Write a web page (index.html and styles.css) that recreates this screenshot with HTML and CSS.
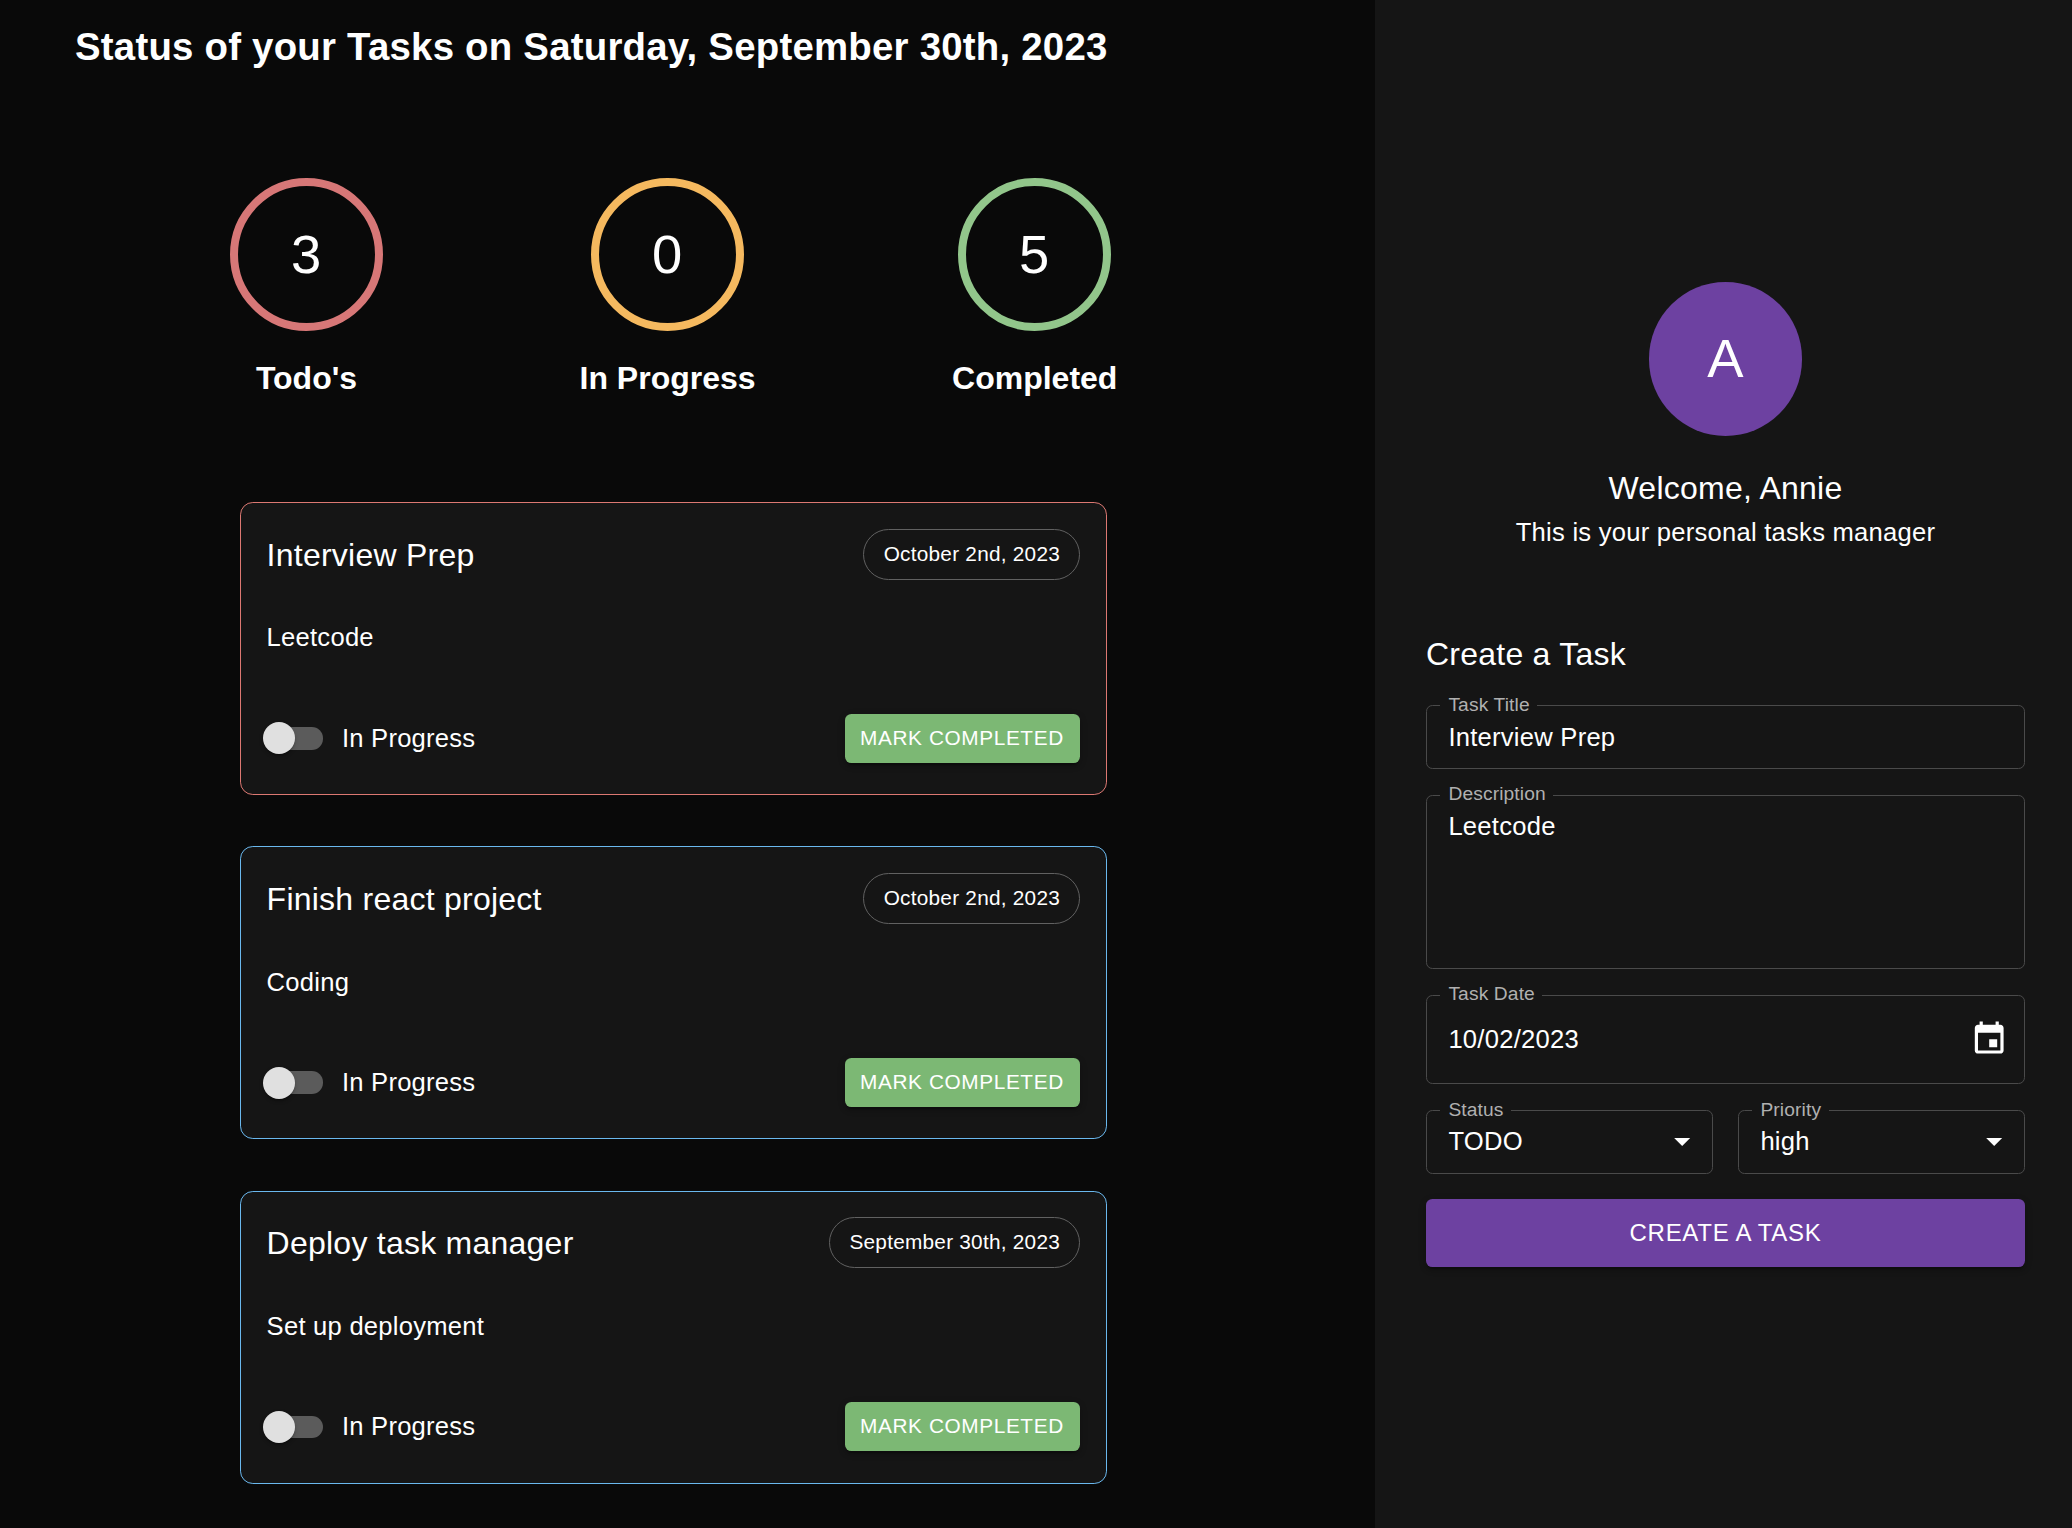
FILE: index.html
```html
<!DOCTYPE html>
<html lang="en">
<head>
<meta charset="utf-8">
<title>Task Manager</title>
<link rel="stylesheet" href="styles.css">
</head>
<body>
<main class="board">
  <h1 class="board-title">Status of your Tasks on Saturday, September 30th, 2023</h1>
  <section class="counters">
    <div class="counter"><div class="ring ring-todo">3</div><h2 class="counter-label">Todo's</h2></div>
    <div class="counter"><div class="ring ring-progress">0</div><h2 class="counter-label">In Progress</h2></div>
    <div class="counter"><div class="ring ring-done">5</div><h2 class="counter-label">Completed</h2></div>
  </section>
  <section class="tasks">
    <article class="task task-high">
      <header class="task-head"><h3 class="task-title">Interview Prep</h3><span class="chip">October 2nd, 2023</span></header>
      <p class="task-text">Leetcode</p>
      <footer class="task-foot"><span class="switch"><span class="thumb"></span></span><span class="switch-label">In Progress</span><button class="done-btn">MARK COMPLETED</button></footer>
    </article>
    <article class="task">
      <header class="task-head"><h3 class="task-title">Finish react project</h3><span class="chip">October 2nd, 2023</span></header>
      <p class="task-text">Coding</p>
      <footer class="task-foot"><span class="switch"><span class="thumb"></span></span><span class="switch-label">In Progress</span><button class="done-btn">MARK COMPLETED</button></footer>
    </article>
    <article class="task">
      <header class="task-head"><h3 class="task-title">Deploy task manager</h3><span class="chip">September 30th, 2023</span></header>
      <p class="task-text">Set up deployment</p>
      <footer class="task-foot"><span class="switch"><span class="thumb"></span></span><span class="switch-label">In Progress</span><button class="done-btn">MARK COMPLETED</button></footer>
    </article>
  </section>
</main>
<aside class="sidebar">
  <div class="profile">
    <div class="avatar">A</div>
    <h2 class="welcome">Welcome, Annie</h2>
    <p class="tagline">This is your personal tasks manager</p>
  </div>
  <form class="form">
    <h2 class="form-title">Create a Task</h2>
    <fieldset class="field"><legend>Task Title</legend><div class="value">Interview Prep</div></fieldset>
    <fieldset class="field field-area"><legend>Description</legend><div class="value">Leetcode</div></fieldset>
    <fieldset class="field field-date"><legend>Task Date</legend><div class="value">10/02/2023
      <svg class="icon" viewBox="0 0 24 24"><path d="M17 12h-5v5h5v-5zM16 1v2H8V1H6v2H5c-1.11 0-1.99.9-1.99 2L3 19c0 1.1.89 2 2 2h14c1.1 0 2-.9 2-2V5c0-1.1-.9-2-2-2h-1V1h-2zm3 18H5V8h14v11z"/></svg></div></fieldset>
    <div class="field-row">
      <fieldset class="field field-select"><legend>Status</legend><div class="value">TODO<svg class="icon" viewBox="0 0 24 24"><path d="M7 10l5 5 5-5z"/></svg></div></fieldset>
      <fieldset class="field field-select"><legend>Priority</legend><div class="value">high<svg class="icon" viewBox="0 0 24 24"><path d="M7 10l5 5 5-5z"/></svg></div></fieldset>
    </div>
    <button class="create-btn" type="button">CREATE A TASK</button>
  </form>
</aside>
</body>
</html>
```
FILE: styles.css
```css
* { box-sizing: border-box; }
body {
  margin: 0;
  display: flex;
  width: 2072px;
  height: 1528px;
  overflow: hidden;
  background: #090909;
  color: #fff;
  font-family: "Liberation Sans", Arial, Helvetica, sans-serif;
  font-size: 25.6px;
  letter-spacing: 0.00938em;
}
h1, h2, h3, p { margin: 0; }
button { border: 0; color: #fff; font-family: inherit; padding: 0; }

/* Left column: counters and task cards */
.board { width: 1375px; padding: 22px 0 0 75px; }
.board-title { font-size: 38.4px; line-height: 50px; letter-spacing: 0.0058em; white-space: nowrap; }
.counters { display: flex; gap: 196.5px; margin: 106px 0 0 155px; }
.counter { display: flex; flex-direction: column; align-items: center; }
.ring {
  width: 153px;
  height: 153px;
  padding: 2px 1px 0 0;
  border: 8px solid;
  border-radius: 50%;
  display: flex;
  align-items: center;
  justify-content: center;
  font-size: 54.4px;
  letter-spacing: 0;
  line-height: 1;
}
.ring.ring-todo { border-color: #d77777; }
.ring.ring-progress { border-color: #f5b95f; }
.ring.ring-done { border-color: #92c68b; }
.counter-label { margin-top: 23px; font-size: 32px; line-height: 48px; letter-spacing: 0; }

.tasks { margin: 100.2px 0 0 165px; width: 867px; display: flex; flex-direction: column; gap: 51.2px; }
.task {
  height: 293px;
  padding: 25.6px;
  border: 1px solid #6ab8ee;
  border-radius: 12.8px;
  background: #151515;
}
.task-high { border-color: #dc7872; }
.task-head { display: flex; justify-content: space-between; align-items: center; height: 51.2px; }
.task-title { padding-top: 2px; font-size: 32px; font-weight: 400; line-height: 51.2px; letter-spacing: 0.0075em; }
.chip {
  height: 51.2px;
  border: 1px solid #616161;
  border-radius: 26px;
  padding: 0 19.4px;
  font-size: 20.8px;
  line-height: 47.4px;
}
.task-text { margin-top: 38.5px; line-height: 38.4px; }
.task-foot { display: flex; align-items: center; margin-top: 57.1px; height: 49px; }
.switch { width: 60px; height: 32px; margin-left: -3.6px; display: flex; align-items: center; }
.switch::after { content: ""; width: 44px; height: 22.4px; margin-left: -16px; border-radius: 0 11.2px 11.2px 0; background: #5b5b5b; }
.thumb { position: relative; z-index: 1; flex: none; width: 32px; height: 32px; border-radius: 50%; background: #e0e0e0; box-shadow: 0 3px 2px -2px rgba(0,0,0,.2), 0 2px 2px rgba(0,0,0,.14), 0 2px 5px rgba(0,0,0,.12); }
.switch-label { margin-left: 18.9px; }
.done-btn {
  width: 235px;
  height: 49px;
  margin-left: auto;
  padding: 0 2px 1.4px 0;
  border-radius: 6.4px;
  background: #7cb874;
  font-size: 20.8px;
  letter-spacing: 0.6px;
  box-shadow: 0 5px 2px -3px rgba(0,0,0,.2), 0 3px 3px rgba(0,0,0,.14), 0 2px 8px rgba(0,0,0,.12);
}

/* Right column: profile and task form */
.sidebar { flex: 1; background: #151515; padding: 282px 47px 0 51px; }
.profile { display: flex; flex-direction: column; align-items: center; }
.avatar {
  width: 153.6px;
  height: 153.6px;
  border-radius: 50%;
  background: #6d41a1;
  display: flex;
  align-items: center;
  justify-content: center;
  font-size: 54.4px;
  letter-spacing: 0;
}
.welcome { margin-top: 27.4px; font-size: 32px; font-weight: 400; line-height: 51px; letter-spacing: 0.0075em; }
.tagline { line-height: 36px; }
.form-title { margin: 79px 0 14px; font-size: 32px; font-weight: 400; line-height: 51px; letter-spacing: 0.0075em; }
.field {
  min-width: 0;
  height: 75px;
  margin: 0 0 15px;
  padding: 0 16px 0 21.4px;
  border: 1px solid #4a4a4a;
  border-radius: 6.4px;
}
.field legend {
  height: 23px;
  margin-left: -8.4px;
  padding: 0 7.4px 0 8.4px;
  color: #b0b0b0;
  font-size: 19.2px;
  line-height: 22px;
  letter-spacing: 0.007em;
}
.value { display: flex; align-items: center; justify-content: space-between; height: 42px; }
.field-area { height: 185px; }
.field-area .value { height: 40px; }
.field-date { height: 100px; }
.field-date .value { height: 66px; }
.field-area legend, .field-date legend { line-height: 20px; }
.field-row { display: flex; gap: 25px; }
.field-select { flex: 1; padding-right: 11px; }
.field-select .value { height: 40px; }
.icon { width: 38.4px; height: 38.4px; margin-bottom: 2px; fill: #fff; }
.create-btn {
  display: block;
  width: 100%;
  height: 68px;
  margin-top: 10px;
  border-radius: 6.4px;
  background: #6d41a1;
  font-size: 24px;
  letter-spacing: 0.7px;
  box-shadow: 0 5px 2px -3px rgba(0,0,0,.2), 0 3px 3px rgba(0,0,0,.14), 0 2px 8px rgba(0,0,0,.12);
}
```
